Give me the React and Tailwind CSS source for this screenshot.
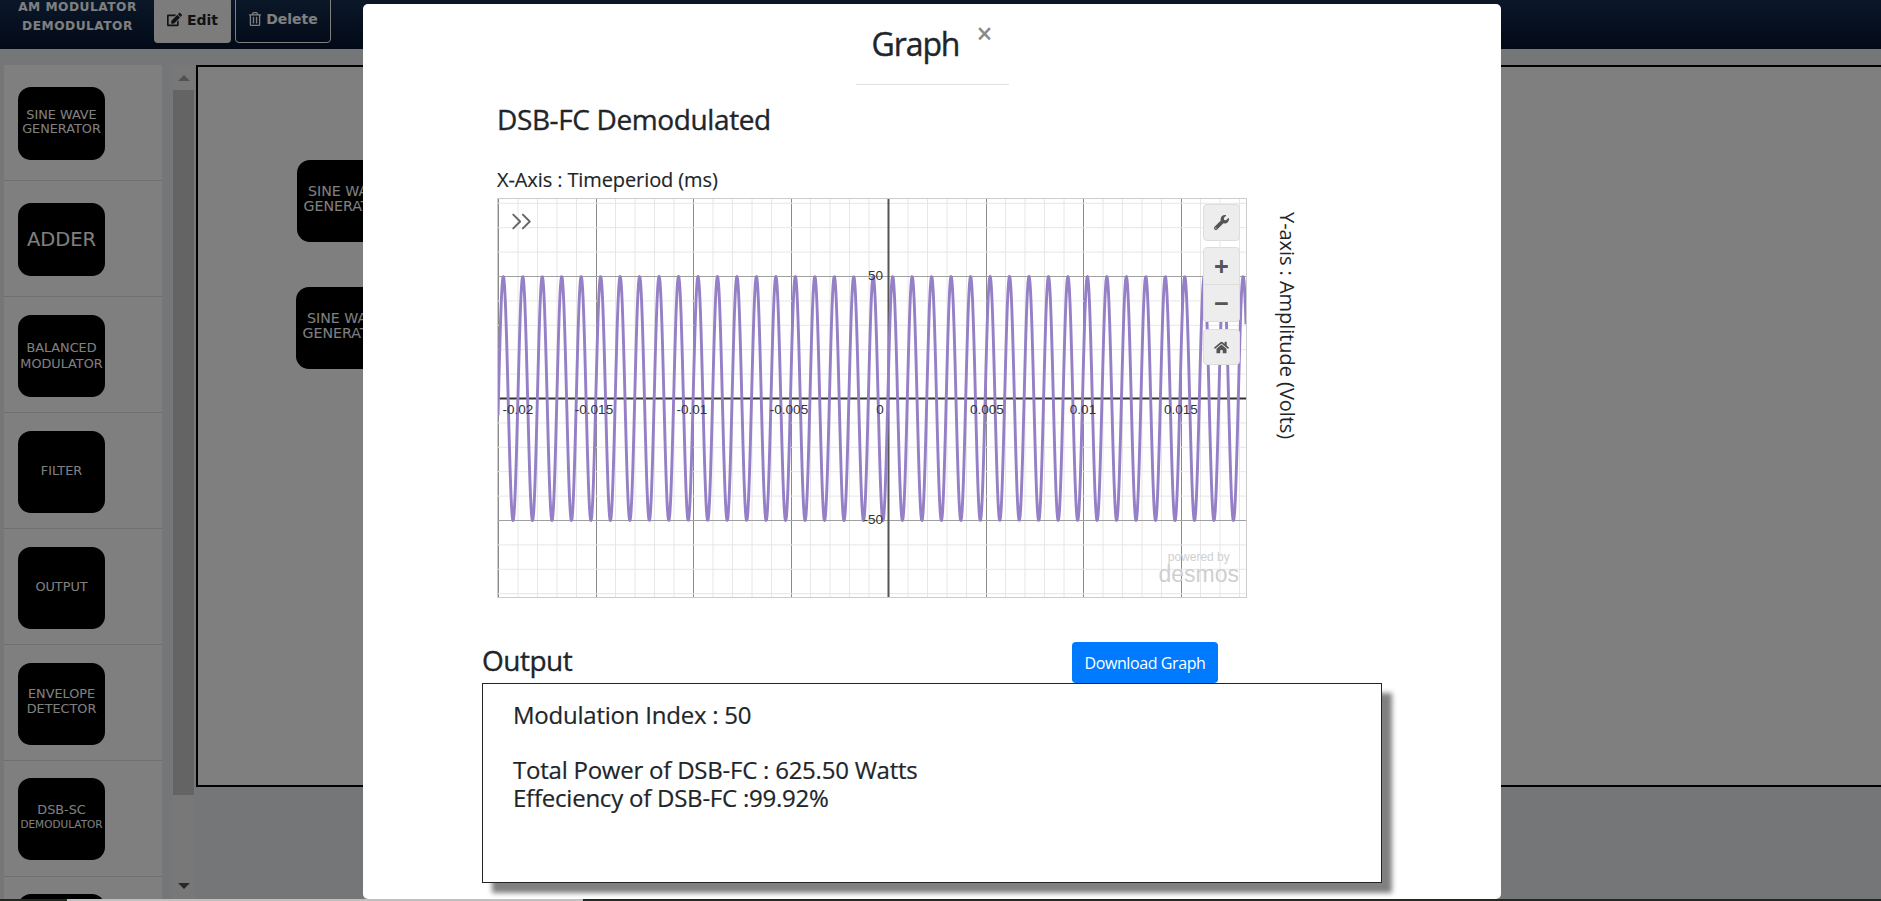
import React from 'react'
import { FaEdit, FaRegTrashAlt, FaWrench, FaHome } from 'react-icons/fa'
import { ChevronsRight } from 'lucide-react'

const sidebarItems = [
  { lines: ['SINE WAVE', 'GENERATOR'], pad: 'pt-[22px]', height: 'h-[73px]', inner: 'pb-[3px]', leading: 'leading-[14.5px]' },
  { lines: ['ADDER'], pad: 'pt-[22px]', height: 'h-[73px]', inner: 'pb-0', big: true },
  { lines: ['BALANCED', 'MODULATOR'], pad: 'pt-[18px]', height: 'h-[82px]', inner: 'pb-0', leading: 'leading-[16px]' },
  { lines: ['FILTER'], pad: 'pt-[18px]', height: 'h-[82px]', inner: 'pb-[2px]', leading: 'leading-[14.5px]' },
  { lines: ['OUTPUT'], pad: 'pt-[18px]', height: 'h-[82px]', inner: 'pb-[2px]', leading: 'leading-[14.5px]' },
  { lines: ['ENVELOPE', 'DETECTOR'], pad: 'pt-[18px]', height: 'h-[82px]', inner: 'pb-[5px]', leading: 'leading-[14.5px]' },
  { lines: ['DSB-SC', 'DEMODULATOR'], pad: 'pt-[17px]', height: 'h-[82px]', inner: 'pb-[4px]', leading: 'leading-[14.5px]', small: true },
  { lines: [''], pad: 'pt-[17px]', height: 'h-[82px]', inner: 'pb-0', leading: 'leading-[14.5px]' },
]

// graph drawing, coords relative to the inside of the bordered box
const W = 748
const H = 398
const X0 = 390.5 // y axis
const Y0 = 199.5 // x axis
const UNIT_X = 19.5
const UNIT_Y = 24.4
const AMP = 122
const PEAK = 394.7
const PERIOD = 19.47

const buildWave = () => {
  let d = ''
  for (let x = 0; x <= W; x += 0.5) {
    const y = Y0 - AMP * Math.cos((2 * Math.PI * (x - PEAK)) / PERIOD)
    d += (x === 0 ? 'M' : 'L') + x + ' ' + y.toFixed(2) + ' '
  }
  return d
}

const xLabels = [
  ['-0.02', 20],
  ['-0.015', 96],
  ['-0.01', 194],
  ['-0.005', 291],
  ['0', 382],
  ['0.005', 489],
  ['0.01', 585],
  ['0.015', 683],
]

const DesmosGraph = () => {
  const verticals = []
  for (let i = -21; i <= 19; i++) verticals.push(i)
  const horizontals = []
  for (let i = -9; i <= 9; i++) horizontals.push(i)
  return (
    <svg width={W} height={H} viewBox={`0 0 ${W} ${H}`} className="block">
      {verticals.map((i) => {
        const major = i % 5 === 0
        const x = X0 + i * UNIT_X
        return <line key={i} x1={major ? Math.floor(x) + 0.5 : x} x2={major ? Math.floor(x) + 0.5 : x} y1="0" y2={H} stroke={major ? '#8a8a8a' : '#e6e6e6'} strokeWidth="1" />
      })}
      {horizontals.map((i) => {
        const major = i % 5 === 0
        const y = Y0 + i * UNIT_Y
        return <line key={i} y1={major ? Math.floor(y) + 0.5 : y} y2={major ? Math.floor(y) + 0.5 : y} x1="0" x2={W} stroke={major ? '#a0a0a0' : '#e6e6e6'} strokeWidth="1" />
      })}
      <line x1={X0} x2={X0} y1="0" y2={H} stroke="#555" strokeWidth="2" />
      <line x1="0" x2={W} y1={Y0} y2={Y0} stroke="#333" strokeWidth="2" />
      <path d={buildWave()} fill="none" stroke="#957fc6" strokeWidth="2.9" strokeLinejoin="round" />
      <g fontFamily="'Liberation Sans', sans-serif" fontSize="13.5" fill="#333">
        {xLabels.map(([t, x]) => (
          <text key={t} x={x} y="215" textAnchor="middle">{t}</text>
        ))}
        <text x="385" y="81" textAnchor="end">50</text>
        <text x="385" y="325" textAnchor="end">-50</text>
      </g>
    </svg>
  )
}

const GraphControls = () => (
  <div className="absolute left-[705px] top-[5px] flex w-[37px] flex-col text-[#555]">
    <div className="flex h-[37px] items-center justify-center rounded-[4px] border border-[#ddd] bg-[#ededed]">
      <FaWrench size={15} />
    </div>
    <div className="mt-[6px] flex h-[38px] items-center justify-center rounded-t-[4px] border border-[#ddd] bg-[#ededed] text-[26px] font-bold leading-none">+</div>
    <div className="flex h-[37px] items-center justify-center rounded-b-[4px] border border-t-0 border-[#ddd] bg-[#ededed] text-[26px] font-bold leading-none">−</div>
    <div className="mt-[7px] flex h-[36px] items-center justify-center rounded-[4px] border border-[#ddd] bg-[#ededed]">
      <FaHome size={15} />
    </div>
  </div>
)

const Block = ({ lines, small, big, canvas, inner, leading }) => (
  <div className={`flex h-full w-full flex-col items-center justify-center rounded-[13px] bg-black font-['DejaVu_Sans',sans-serif] text-white ${inner}`}>
    {lines.map((l, i) => {
      let size = `text-[12.8px] ${leading}`
      if (big) size = 'text-[19.5px] leading-[24px]'
      if (small && i === 1) size = 'text-[10.5px] leading-[14.5px]'
      if (canvas) size = 'text-[14.2px] leading-[15.5px]'
      return <span key={i} className={size}>{l}</span>
    })}
  </div>
)

const App = () => {
  return (
    <div className="relative h-[901px] w-full overflow-hidden bg-[#e9ecef] font-['Open_Sans',sans-serif] text-[#212529]">
      {/* top bar, scrolled a little so it is cut at the top */}
      <header className="flex h-[49px] items-center bg-gradient-to-b from-[#152f50] to-[#061430] text-white">
        <div className="-mt-[15px] ml-[6px] w-[143px] text-center font-['DejaVu_Sans',sans-serif] text-[12.2px] font-bold leading-[19.5px] tracking-[0.5px]">
          <div>AM MODULATOR</div>
          <div>DEMODULATOR</div>
        </div>
        <div className="ml-[5px] -mt-[12px] flex h-[49px] w-[77px] items-end justify-center gap-[5px] rounded-[4px] bg-[#f8f9fa] pb-[16px] font-['DejaVu_Sans',sans-serif] text-[14px] font-bold leading-none text-[#212529]">
          <FaEdit size={15} /> Edit
        </div>
        <div className="ml-[4px] -mt-[12px] flex h-[49px] w-[96px] items-end justify-center gap-[4px] rounded-[4px] border border-white pb-[16px] font-['DejaVu_Sans',sans-serif] text-[14px] font-bold leading-none">
          <FaRegTrashAlt size={14} /> Delete
        </div>
      </header>

      <main className="flex h-[850px] pt-[16px]">
        <div className="ml-[4px] h-[834px] w-[158px] overflow-hidden bg-white">
          {sidebarItems.map((item, i) => (
            <div key={i} className={`h-[116px] border-b border-[#dedede] pl-[14px] ${item.pad}`}>
              <div className={`w-[87px] ${item.height}`}>
                <Block lines={item.lines} small={item.small} big={item.big} inner={item.inner} leading={item.leading} />
              </div>
            </div>
          ))}
        </div>

        <div className="ml-[10px] flex h-[834px] w-[23px] flex-col items-center bg-[#f1f1f1]">
          <div className="flex h-[25px] w-full items-center justify-center">
            <div className="h-0 w-0 border-x-[6px] border-b-[6px] border-x-transparent border-b-[#a3a3a3]" />
          </div>
          <div className="h-[705px] w-[21px] bg-[#c8c8c8]" />
          <div className="flex h-[104px] w-full items-center justify-center pt-[77px]">
            <div className="h-0 w-0 border-x-[6px] border-t-[6px] border-x-transparent border-t-[#505050]" />
          </div>
        </div>

        <div className="relative ml-[1px] h-[722px] flex-1 border-2 border-r-0 border-black bg-white">
          <div className="absolute left-[99px] top-[93px] h-[82px] w-[100px]"><Block canvas inner="pb-[4px]" lines={['SINE WAVE', 'GENERATOR']} /></div>
          <div className="absolute left-[98px] top-[220px] h-[82px] w-[100px]"><Block canvas inner="pb-[4px]" lines={['SINE WAVE', 'GENERATOR']} /></div>
        </div>
      </main>

      {/* modal backdrop */}
      <div className="absolute inset-0 bg-black/50" />

      {/* strip the screenshot shows under the modal */}
      <div className="absolute bottom-0 left-0 flex h-[2px] w-full">
        <div className="w-[67px] bg-[#1f2a1f]" />
        <div className="w-[516px] bg-[#c0c0c0]" />
        <div className="flex-1 bg-[#242824]" />
      </div>

      <div className="absolute left-[363px] top-[4px] h-[895px] w-[1138px] rounded-[5px] bg-white">
        <div className="flex justify-center pt-[16px]">
          <h3 className="text-[32px] leading-[48px] tracking-[-1.1px] [-webkit-text-stroke:0.4px_#212529]">Graph</h3>
          <button className="ml-[17px] mt-[1px] h-[24px] text-[28px] font-semibold leading-[24px] text-[#8a8a8a]">×</button>
        </div>
        <div className="mx-auto mt-[16px] h-px w-[153px] bg-[#dee2e6]" />

        <h4 className="ml-[134px] mt-[13px] text-[28px] leading-[42px] tracking-[-0.38px] [-webkit-text-stroke:0.35px_#212529]">DSB-FC Demodulated</h4>
        <div className="ml-[134px] mt-[25px] text-[20px] leading-[30px] tracking-[-0.1px] [-webkit-text-stroke:0.15px_#212529]">X-Axis : Timeperiod (ms)</div>

        <div className="ml-[134px] mt-[3px] flex">
          <div className="relative h-[400px] w-[750px] border border-[#ccc]">
            <DesmosGraph />
            <ChevronsRight className="absolute left-[7px] top-[6px] text-[#666]" size={33} strokeWidth={1.4} />
            <GraphControls />
            <div className="absolute bottom-[12px] right-[7px] text-center font-['Liberation_Sans',sans-serif] text-[#cfcfcf]">
              <div className="text-[12px] leading-[12px]">powered by</div>
              <div className="text-[23px] leading-[22px]">desmos</div>
            </div>
          </div>
          <div className="ml-[25px] mt-[14px] text-[20px] leading-[30px] tracking-[-0.05px] [writing-mode:vertical-rl]">Y-axis : Amplitude (Volts)</div>
        </div>

        <div className="ml-[119px] mt-[44px] flex items-start">
          <h4 className="-mt-[3px] w-[590px] text-[28px] leading-[42px] tracking-[-0.5px] [-webkit-text-stroke:0.35px_#212529]">Output</h4>
          <button className="h-[41px] w-[146px] rounded-[4px] bg-[#007bff] text-[16px] tracking-[-0.4px] text-white">Download Graph</button>
        </div>

        <div className="ml-[119px] h-[200px] w-[900px] border border-[#212529] bg-white pl-[30px] pt-[17px] text-[24px] leading-[28px] tracking-[-0.23px] shadow-[10px_10px_5px_#808080] [-webkit-text-stroke:0.2px_#212529]">
          <div>Modulation Index : 50</div>
          <div className="mt-[27px]">Total Power of DSB-FC : 625.50 Watts</div>
          <div>Effeciency of DSB-FC :99.92%</div>
        </div>
      </div>
    </div>
  )
}

export default App
